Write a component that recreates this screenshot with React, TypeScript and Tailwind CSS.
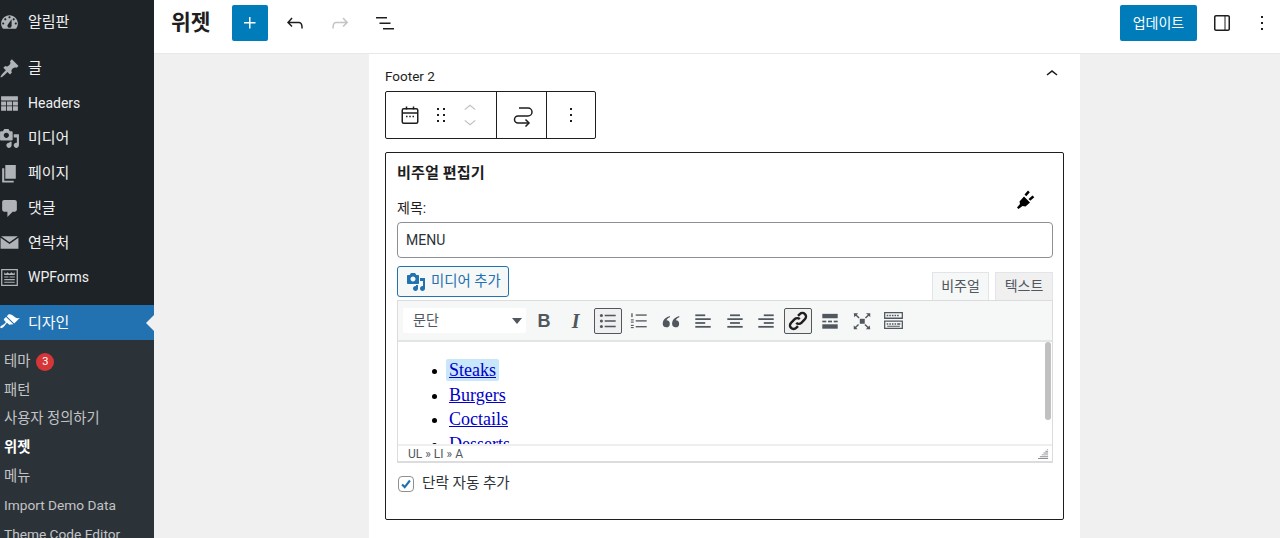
import React from 'react';

const Dash: React.FC<{ d: string; className?: string }> = ({ d, className }) => (
  <svg viewBox="0 0 20 20" className={className ?? 'w-[21px] h-[21px] -ml-[1px] shrink-0 fill-[#b0b4b8]'}>
    <path fillRule="evenodd" d={d} />
  </svg>
);

const Wp: React.FC<{ d: string; className?: string }> = ({ d, className }) => (
  <svg viewBox="0 0 24 24" className={className ?? 'w-6 h-6 fill-[#1e1e1e]'}>
    <path d={d} />
  </svg>
);

const icons = {
  dashboard:
    'M3.76 16h12.48c1.1-1.37 1.76-3.11 1.76-5 0-4.42-3.58-8-8-8s-8 3.58-8 8c0 1.89.66 3.63 1.76 5zM10 4c.55 0 1 .45 1 1s-.45 1-1 1-1-.45-1-1 .45-1 1-1zM6 6c.55 0 1 .45 1 1s-.45 1-1 1-1-.45-1-1 .45-1 1-1zm8 0c.55 0 1 .45 1 1s-.45 1-1 1-1-.45-1-1 .45-1 1-1zm-5.37 5.55L12 7v6c0 1.1-.9 2-2 2s-2-.9-2-2c0-.57.24-1.08.63-1.45zM4 10c.55 0 1 .45 1 1s-.45 1-1 1-1-.45-1-1 .45-1 1-1zm12 0c.55 0 1 .45 1 1s-.45 1-1 1-1-.45-1-1 .45-1 1-1z',
  pin: 'M10.44 3.02l1.82-1.82 6.36 6.35-1.83 1.82c-1.05-.68-2.48-.57-3.41.36l-.75.75c-.92.93-1.04 2.35-.35 3.41l-1.83 1.82-2.41-2.41-2.8 2.79c-.42.42-3.38 2.71-3.8 2.29s1.86-3.39 2.28-3.81l2.79-2.79L4.1 9.36l1.83-1.82c1.05.69 2.48.57 3.4-.36l.75-.75c.93-.92 1.05-2.35.36-3.41z',
  table:
    'M2 3h16v4.200H2zM2 8h4.800v3.800H2zM7.600 8h4.800v3.800H7.600zM13.200 8H18v3.800h-4.800zM2 12.600h4.800V17H2zM7.600 12.600h4.800V17H7.600zM13.200 12.600H18V17h-4.800z',
  media:
    'M13 11V4c0-.55-.45-1-1-1h-1.670L9 1H5L3.670 3H2c-.55 0-1 .45-1 1v7c0 .55.45 1 1 1h10c.55 0 1-.45 1-1zM7 4.500c1.380 0 2.500 1.120 2.500 2.500S8.380 9.500 7 9.500 4.500 8.380 4.500 7 5.620 4.500 7 4.500zM14 6h5v10.500c0 1.380-1.120 2.500-2.500 2.500S14 17.880 14 16.500s1.120-2.500 2.500-2.500c.17 0 .34.020.5.050V9h-3V6zm-4 8.050V13h2v3.500c0 1.380-1.120 2.500-2.500 2.500S7 17.880 7 16.500 8.120 14 9.500 14c.17 0 .34.020.5.050z',
  pages: 'M6 2h10v13H6zM3 5h2v12h9v1.500H3z',
  comment:
    'M5 2h10c1.1 0 2 .9 2 2v7c0 1.1-.9 2-2 2h-2l-5 5v-5H5c-1.1 0-2-.9-2-2V4c0-1.1.9-2 2-2z',
  mail: 'M2 4h16l-8 5.800zM1.500 5.500l8.500 6 8.500-6V16h-17z',
  forms:
    'M2 2h16v16H2zm1.200 1.200v13.600h13.600V3.200zM5 5l1.500 1.500L8 5l2 1.500L12 5l1.500 1.500L15 5v2.500H5zm0 4h4v1H5zm5 0h5v1h-5zm-5 2.500h10v1H5zM5 14h10v1H5z',
  brush:
    'M14.48 11.06L7.41 3.99l1.5-1.5c.5-.56 2.3-.47 3.51.32 1.21.8 1.43 1.28 2.91 2.1 1.18.64 2.45 1.26 4.45.85zm-.71.71L6.7 4.7 4.93 6.47c-.39.39-.39 1.02 0 1.41l1.06 1.06c.39.39.39 1.03 0 1.42-.6.6-1.43 1.11-2.21 1.69-.35.26-.7.53-1.01.84C1.43 13.23.93 14.31 1.38 15c.44.69 1.78.47 3.12-.9.31-.31.58-.66.84-1.01.58-.78 1.09-1.61 1.69-2.21.39-.39 1.03-.39 1.42 0l1.06 1.06c.39.39 1.02.39 1.41 0z',
};

const menu = [
  { label: '글', icon: icons.pin, size: 'text-[15px]' },
  { label: 'Headers', icon: icons.table, size: 'text-[14px]' },
  { label: '미디어', icon: icons.media, size: 'text-[15px]' },
  { label: '페이지', icon: icons.pages, size: 'text-[15px]' },
  { label: '댓글', icon: icons.comment, size: 'text-[15px]' },
  { label: '연락처', icon: icons.mail, size: 'text-[15px]' },
  { label: 'WPForms', icon: icons.forms, size: 'text-[14px]' },
];

const subMenu = [
  { label: '패턴', cls: 'h-[28.7px] flex items-center text-[14.3px]' },
  { label: '사용자 정의하기', cls: 'h-[28.7px] flex items-center text-[14.3px]' },
  { label: '위젯', cls: 'h-[28.7px] flex items-center text-[14.3px] font-bold text-white' },
  { label: '메뉴', cls: 'h-[28.7px] flex items-center text-[14.3px]' },
  { label: 'Import Demo Data', cls: 'h-[28.7px] flex items-center text-[13.7px] whitespace-nowrap' },
  { label: 'Theme Code Editor', cls: 'h-[28.7px] flex items-start pt-[4px] text-[13.7px] whitespace-nowrap' },
];

const Sidebar = () => (
  <aside className="w-[154px] shrink-0 h-full bg-[#1d2327] text-[#f0f0f1] overflow-hidden">
    <div className="h-[34px] mt-[5.5px] mb-[11.5px] flex items-center gap-[8px] text-[15px]">
      <Dash d={icons.dashboard} />
      <span>알림판</span>
    </div>
    {menu.map(item => (
      <div key={item.label} className={`h-[34.9px] flex items-center gap-[8px] ${item.size}`}>
        <Dash d={item.icon} />
        <span>{item.label}</span>
      </div>
    ))}
    <div className="mt-[9.7px] relative h-[35px] bg-[#2271b1] text-white text-[15px] flex items-center gap-[8px]">
      <Dash d={icons.brush} className="w-[21px] h-[21px] -ml-[1px] shrink-0 fill-white" />
      <span className="mt-[1px]">디자인</span>
      <span className="absolute right-0 top-[10px] border-y-[8px] border-y-transparent border-r-[8px] border-r-[#f0f0f0]" />
    </div>
    <div className="bg-[#2c3338] h-[200px] pt-[7.5px] pl-[4px] text-[#c3c4c7]">
      <div className="h-[28.7px] flex items-center gap-[6px] text-[14.3px]">
        <span>테마</span>
        <span className="w-[18px] h-[18px] rounded-full bg-[#d63638] text-white text-[11px] flex items-center justify-center">3</span>
      </div>
      {subMenu.map(item => (
        <div key={item.label} className={item.cls}>
          {item.label}
        </div>
      ))}
    </div>
  </aside>
);

const Header = () => (
  <header className="h-[54px] shrink-0 bg-white border-b border-[#e8e8e8] flex items-start pt-[5px] pl-[17px] pr-[6px]">
    <h1 className="text-[21.5px] font-bold text-[#1e1e1e] w-[61px] leading-[36px]">위젯</h1>
    <button className="w-[36px] h-[36px] rounded-[2px] bg-[#007cba] flex items-center justify-center">
      <Wp d="M11 12.5V17.5H12.5V12.5H17.5V11H12.5V6H11V11H6V12.5H11Z" className="w-6 h-6 fill-white" />
    </button>
    <div className="flex items-center gap-[21px] ml-[15px] h-[36px]">
      <Wp d="M18.3 11.7c-.6-.6-1.4-.9-2.3-.9H6.7l2.9-3.3-1.1-1-4.5 5L8.5 16l1-1-2.7-2.7H16c.5 0 .9.2 1.3.5 1 1 1 3.4 1 4.5v.3h1.5v-.2c0-1.5 0-4.3-1.5-5.7z" />
      <Wp d="M15.6 6.5l-1.1 1 2.9 3.3H8c-.9 0-1.7.3-2.3.9-1.4 1.5-1.4 4.2-1.4 5.6v.2h1.5v-.3c0-1.1 0-3.5 1-4.5.3-.3.7-.5 1.3-.5h9.2L14.5 15l1.1 1.1 4.6-4.6-4.6-5z" className="w-6 h-6 fill-[#c4c4c4]" />
      <Wp d="M3 6h11v1.5H3V6Zm3.5 5.5h11V13h-11v-1.5ZM21 17H10v1.5h11V17Z" />
    </div>
    <button className="ml-auto w-[77px] h-[36px] rounded-[2px] bg-[#007cba] text-white text-[14px]">업데이트</button>
    <div className="flex items-center ml-[13px] gap-[16px] h-[36px]">
      <Wp d="M18 4H6c-1.1 0-2 .9-2 2v12c0 1.1.9 2 2 2h12c1.1 0 2-.9 2-2V6c0-1.1-.9-2-2-2zM6 5.5h8.5v13H6c-.3 0-.5-.2-.5-.5V6c0-.3.2-.5.5-.5zm12.5 12.5c0 .3-.2.5-.5.5h-2.5v-13H18c.3 0 .5.2.5.5v12z" />
      <Wp d="M13 19h-2v-2h2v2zm0-6h-2v-2h2v2zm0-6h-2V5h2v2z" />
    </div>
  </header>
);

const BlockToolbar = () => (
  <div className="w-[211px] h-[48px] bg-white border border-[#1e1e1e] rounded-[2px] flex items-stretch">
    <div className="w-[111px] border-r border-[#1e1e1e] flex items-center pl-[12px]">
      <svg viewBox="0 0 24 24" className="w-6 h-6 fill-none stroke-[#1e1e1e] stroke-[1.5]">
        <rect x="4.25" y="5.75" width="15.5" height="14.5" rx="1.5" />
        <path d="M4.25 10h15.5M8.5 3.5v3M15.5 3.500v3" />
        <path d="M8 13.5h1.5M11.25 13.5h1.5M14.5 13.5H16" />
      </svg>
      <Wp d="M8 7h2V5H8v2zm0 6h2v-2H8v2zm0 6h2v-2H8v2zm6-14v2h2V5h-2zm0 8h2v-2h-2v2zm0 6h2v-2h-2v2z" className="w-6 h-6 fill-[#1e1e1e] ml-[7px]" />
      <div className="flex flex-col gap-[8px] ml-[10px]">
        <svg viewBox="0 0 16 8" className="w-[14px] h-[8px] fill-none stroke-[#c0c0c0] stroke-[1.4]"><path d="M2 7l6-5 6 5" /></svg>
        <svg viewBox="0 0 16 8" className="w-[14px] h-[8px] fill-none stroke-[#c0c0c0] stroke-[1.4]"><path d="M2 1l6 5 6-5" /></svg>
      </div>
    </div>
    <div className="w-[50px] border-r border-[#1e1e1e] flex items-center justify-center">
      <svg viewBox="0 0 24 24" className="w-6 h-6 fill-none stroke-[#1e1e1e] stroke-[1.5]">
        <path d="M9 5h9a4 4 0 0 1 0 8H8a3.500 3.500 0 0 0 0 7h10.500" />
        <path d="M15.500 16.500l3.500 3.500-3.500 3.500" />
      </svg>
    </div>
    <div className="flex-1 flex items-center justify-center">
      <Wp d="M13 19h-2v-2h2v2zm0-6h-2v-2h2v2zm0-6h-2V5h2v2z" />
    </div>
  </div>
);

const ToolIcon: React.FC<{ children: React.ReactNode; active?: boolean }> = ({ children, active }) => (
  <div className={active
    ? 'w-[28px] h-[26px] rounded-[2px] border border-[#50575e] bg-[#f0f0f1] flex items-center justify-center'
    : 'w-[28px] h-[26px] flex items-center justify-center'}>
    {children}
  </div>
);

const Glyph: React.FC<{ children: React.ReactNode }> = ({ children }) => (
  <svg viewBox="0 0 20 20" className="w-[22px] h-[22px] shrink-0 fill-[#50575e]">{children}</svg>
);

const Lines: React.FC<{ rows: [number, number][] }> = ({ rows }) => (
  <Glyph>
    {rows.map(([x, w], i) => (
      <rect key={i} x={x} y={4 + i * 3.5} width={w} height="1.6" />
    ))}
  </Glyph>
);

const MceToolbar = () => (
  <div className="h-[41px] bg-[#f6f7f7] border-b-2 border-[#e2e4e7] flex items-center pl-[5px]">
    <div className="w-[123px] h-[25px] bg-white rounded-[2px] flex items-center justify-between pl-[10px] pr-[4px] text-[14px] text-[#50575e]">
      <span>문단</span>
      <span className="border-x-[5px] border-x-transparent border-t-[6px] border-t-[#50575e]" />
    </div>
    <div className="flex items-center gap-[3.75px] ml-[4px]">
      <ToolIcon><span className="font-['Liberation_Sans',sans-serif] font-bold text-[18px] leading-none text-[#50575e]">B</span></ToolIcon>
      <ToolIcon><span className="font-['Liberation_Serif',serif] italic font-bold text-[20px] leading-none text-[#50575e]">I</span></ToolIcon>
      <ToolIcon active>
        <Glyph>
          <circle cx="4" cy="5" r="1.400" /><circle cx="4" cy="10" r="1.400" /><circle cx="4" cy="15" r="1.400" />
          <rect x="7" y="4.300" width="10" height="1.400" /><rect x="7" y="9.300" width="10" height="1.400" /><rect x="7" y="14.300" width="10" height="1.400" />
        </Glyph>
      </ToolIcon>
      <ToolIcon>
        <Glyph>
          <rect x="3" y="3" width="1.200" height="3.500" /><rect x="2.600" y="8.500" width="2.600" height="1" /><rect x="2.600" y="10.500" width="2.600" height="1" /><rect x="2.600" y="13.500" width="2.600" height="1" /><rect x="2.600" y="15.500" width="2.600" height="1" />
          <rect x="7" y="4" width="10" height="1.200" /><rect x="7" y="9.300" width="10" height="1.200" /><rect x="7" y="14.600" width="10" height="1.200" />
        </Glyph>
      </ToolIcon>
      <ToolIcon>
        <Glyph>
          <path d="M9 5.500C6 6.500 2.500 8.500 2.500 12.500a3.200 3.200 0 1 0 3.400-3.200c.3-1.200 1.500-2.200 3.100-2.800V5.500z" />
          <path d="M17.500 5.500c-3 1-6.500 3-6.500 7a3.200 3.200 0 1 0 3.400-3.200c.3-1.200 1.500-2.200 3.100-2.800V5.500z" />
        </Glyph>
      </ToolIcon>
      <ToolIcon><Lines rows={[[3, 9], [3, 14], [3, 9], [3, 14]]} /></ToolIcon>
      <ToolIcon><Lines rows={[[5.500, 9], [3, 14], [5.500, 9], [3, 14]]} /></ToolIcon>
      <ToolIcon><Lines rows={[[8, 9], [3, 14], [8, 9], [3, 14]]} /></ToolIcon>
      <ToolIcon active>
        <svg viewBox="0 0 20 20" className="w-[24px] h-[24px] shrink-0 fill-none stroke-[#1e1e1e] stroke-[2]">
          <path d="M8.500 11.500a3 3 0 0 0 4.300 0l3-3a3 3 0 0 0-4.300-4.300L10 5.700" />
          <path d="M11.500 8.500a3 3 0 0 0-4.300 0l-3 3a3 3 0 0 0 4.300 4.300L10 14.300" />
        </svg>
      </ToolIcon>
      <ToolIcon>
        <Glyph>
          <rect x="3" y="3.500" width="14" height="4" /><rect x="3" y="13" width="14" height="4" />
          <rect x="3" y="9.700" width="3.600" height="1.500" /><rect x="8.200" y="9.700" width="3.600" height="1.500" /><rect x="13.400" y="9.700" width="3.600" height="1.500" />
        </Glyph>
      </ToolIcon>
      <ToolIcon>
        <Glyph>
          <rect x="8" y="8" width="4.500" height="4.500" />
          <path d="M2.500 3h4L5.200 4.300l2.600 2.600-.9.900-2.600-2.600L3 6.500zM17.500 3v3.500l-1.300-1.300-2.600 2.600-.9-.9 2.600-2.600L13.500 3zM2.500 17.500v-3.500l1.300 1.300 2.600-2.600.9.900-2.600 2.600 1.300 1.300zM17.500 17.500h-4l1.300-1.300-2.600-2.600.9-.9 2.600 2.600 1.300-1.300z" />
        </Glyph>
      </ToolIcon>
      <ToolIcon>
        <svg viewBox="0 0 20 20" className="w-[21px] h-[21px] shrink-0 fill-[#50575e]">
          <path fillRule="evenodd" d="M1 2h18v6.500H1V2zm1.200 1.200v4h15.600v-4H2.200zM1 10h18v8H1v-8zm1.200 1.200v5.600h15.600v-5.600H2.200z" />
          <path d="M3.500 4.500h1.500V6H3.500zM6 4.500h1.500V6H6zM8.500 4.500H10V6H8.500zM11 4.500h1.500V6H11zM13.500 4.500H15V6h-1.500zM3.500 12.500H5V14H3.500zM6 12.500h1.500V14H6zM8.500 12.500H10V14H8.500zM11 12.500h1.500V14H11zM13.500 12.500H16.500V14H13.500zM4 15h12v1H4z" />
        </svg>
      </ToolIcon>
    </div>
  </div>
);

const Editor = () => (
  <div className="border border-[#dcdcde] border-b-2 bg-white">
    <MceToolbar />
    <div className="relative h-[102px] overflow-hidden bg-white font-['Liberation_Serif',serif] text-[18px] leading-[24.6px]">
      <ul className="list-disc pl-[51px] pt-[16px] text-[#000]">
        <li><a className="text-[#0000c8] underline bg-[#c8e7fb] rounded-[2px] px-[3px] -mx-[3px] py-[1px]">Steaks</a></li>
        <li><a className="text-[#0000c8] underline">Burgers</a></li>
        <li><a className="text-[#0000c8] underline">Coctails</a></li>
        <li><a className="text-[#0000c8] underline">Desserts</a></li>
      </ul>
      <div className="absolute right-[1px] top-0 w-[6px] h-[78px] rounded-[3px] bg-[#c1c1c1]" />
    </div>
    <div className="relative h-[17px] border-t-2 border-[#eeeeee] bg-white pl-[10px] flex items-center text-[12px] text-[#50575e]">
      UL » LI » A
      <svg viewBox="0 0 12 12" className="absolute right-[3px] bottom-[2px] w-[11px] h-[11px] fill-[#8c8f94]">
        <path d="M10 1h1v1h-1zM8 3h3v1H8zM6 5h5v1H6zM4 7h7v1H4zM2 9h9v1H2zM0 11h11v1H0z" />
      </svg>
    </div>
  </div>
);

const WidgetForm = () => (
  <div className="w-[679px] h-[368px] mt-[13px] border border-[#1e1e1e] rounded-[2px] pl-[11px] pr-[10px] text-[14px] text-[#1e1e1e] relative">
    <h2 className="font-bold text-[15.2px] mt-[10px] h-[20px] leading-[20px]">비주얼 편집기</h2>
    <svg viewBox="0 0 22 22" className="absolute right-[26px] top-[35px] w-[22px] h-[22px] fill-black">
      <path d="M2 19.500L5 16l-.500-2.500L9 8.500l6 6-4.500 4-3-.500-4 3z" />
      <path d="M9.500 6.500L13 2.500l1.800 1.800-3.500 4zM13.500 11l4-3.500 1.800 1.800-4 3.500z" />
    </svg>
    <div className="mt-[15px] h-[20px] leading-[20px]">제목:</div>
    <input
      readOnly
      value="MENU"
      className="block w-full h-[36px] mt-[4px] border border-[#8c8f94] rounded-[4px] px-[8px] text-[14px] text-[#2c3338] bg-white outline-none"
    />
    <div className="flex items-end justify-between mt-[8px] h-[34px]">
      <button className="h-[31px] w-[112px] self-start border border-[#2271b1] rounded-[3px] bg-[#f6f7f7] text-[#2271b1] text-[14.4px] flex items-center pl-[8px] gap-[5px] whitespace-nowrap">
        <Dash d={icons.media} className="w-[20px] h-[20px] shrink-0 fill-[#2271b1]" />
        <span>미디어 추가</span>
      </button>
      <div className="flex gap-[6px] text-[14px]">
        <div className="w-[57px] h-[28px] bg-[#f6f7f7] border border-[#e2e4e7] border-b-0 text-[#50575e] flex items-center justify-center">비주얼</div>
        <div className="w-[58px] h-[28px] bg-[#f0f0f1] border border-[#e2e4e7] border-b-0 text-[#50575e] flex items-center justify-center">텍스트</div>
      </div>
    </div>
    <Editor />
    <label className="flex items-center gap-[8px] mt-[10px] text-[14.6px] text-[#2c3338] ml-[1px]">
      <span className="w-[16px] h-[16px] border border-[#8c8f94] rounded-[4px] bg-white flex items-center justify-center">
        <svg viewBox="0 0 16 16" className="w-[16px] h-[16px] fill-none stroke-[#2271b1] stroke-[2.4]"><path d="M3.500 8.500l3 3 6-7.500" /></svg>
      </span>
      단락 자동 추가
    </label>
  </div>
);

export default function App() {
  return (
    <div className="flex w-[1280px] h-[538px] overflow-hidden bg-[#f0f0f0] font-['Roboto','Noto_Sans_CJK_KR',sans-serif]">
      <Sidebar />
      <main className="flex-1 flex flex-col min-w-0">
        <Header />
        <div className="ml-[215px] w-[711px] flex-1 bg-white px-[16px] overflow-hidden">
          <div className="flex items-center justify-between h-[37px]">
            <span className="text-[13.5px] text-[#1e1e1e] mt-[7px]">Footer 2</span>
            <Wp d="M6.500 12.400L12 8l5.500 4.400-.9 1.200L12 10l-4.500 3.600-1-1.200z" className="w-6 h-6 fill-[#1e1e1e] mt-[3px]" />
          </div>
          <BlockToolbar />
          <WidgetForm />
        </div>
      </main>
    </div>
  );
}
